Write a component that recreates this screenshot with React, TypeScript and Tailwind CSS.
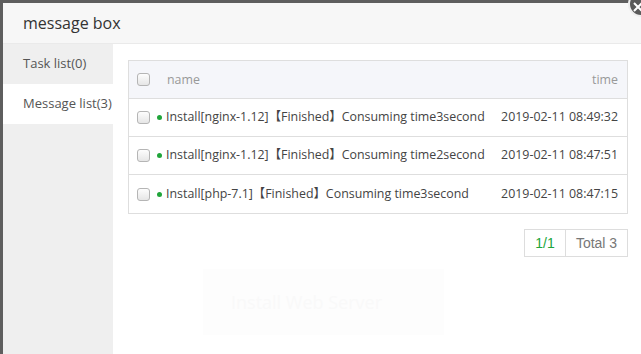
const rows = [
  { name: 'Install[nginx-1.12]【Finished】Consuming time3second', time: '2019-02-11 08:49:32' },
  { name: 'Install[nginx-1.12]【Finished】Consuming time2second', time: '2019-02-11 08:47:51' },
  { name: 'Install[php-7.1]【Finished】Consuming time3second', time: '2019-02-11 08:47:15' },
];

const font = { fontFamily: '"Open Sans", "Noto Sans CJK SC", sans-serif' };

function Checkbox() {
  return <span className="block shrink-0 w-[13px] h-[13px] rounded-[3px] border border-[#b5b5b5] bg-gradient-to-b from-[#fdfdfd] to-[#e6e6e6]" />;
}

export default function App() {
  return (
    <div className="w-[641px] h-[354px] bg-[#5e5e5e] pl-[3px] pt-[3px] overflow-hidden relative" style={font}>
      <div className="w-[660px] h-[360px] bg-white flex flex-col">
        <div className="h-[41px] bg-[#f7f7f7] border-b border-[#eaeaea] flex items-center pl-[20px] text-[16px] text-[#333]">
          message box
        </div>
        <div className="flex flex-1">
          <div className="w-[110px] bg-[#efefef] flex flex-col text-[13px] text-[#555]">
            <div className="h-[40px] flex items-center pl-[20px]">Task list(0)</div>
            <div className="h-[40px] flex items-center pl-[20px] bg-white">Message list(3)</div>
          </div>
          <div className="flex-1 pl-[15px] pt-[16px] relative">
            <div className="w-[500px] border border-[#dedede] text-[12.4px] whitespace-nowrap">
              <div className="h-[38px] bg-[#f5f6fa] flex items-center pl-[8px] pr-[9px] border-b border-[#dedede]">
                <Checkbox />
                <span className="ml-[17px] text-[#999] mt-[2px]">name</span>
                <span className="ml-auto text-[#999] mt-[2px]">time</span>
              </div>
              {rows.map((r, i) => (
                <div key={i} className={`h-[38px] flex items-center pl-[8px] pr-[9px] text-[#444] ${i < 2 ? 'border-b border-[#dedede]' : ''}`}>
                  <Checkbox />
                  <span className="ml-[7px] w-[5px] h-[5px] rounded-full bg-[#20a53a]" />
                  <span className="ml-[4px]">{r.name}</span>
                  <span className="ml-auto">{r.time}</span>
                </div>
              ))}
            </div>
            <div className="w-[500px] flex justify-end mt-[15px]">
              <div className="flex h-[28px] border border-[#ddd] text-[14px]" style={{ fontFamily: '"Liberation Sans", Arial, sans-serif' }}>
                <span className="w-[41px] flex items-center justify-center text-[#20a53a] border-r border-[#ddd]">1/1</span>
                <span className="w-[61px] flex items-center justify-center text-[#777]">Total 3</span>
              </div>
            </div>
            <div className="absolute left-[90px] top-[225px] w-[241px] h-[66px] bg-[#fdfdfd] flex items-center pl-[28px] text-[18px] text-[#f9f9f9]">
              Install Web Server
            </div>
          </div>
        </div>
      </div>
      <div className="absolute left-[628px] top-[-9px] w-[26px] h-[26px] rounded-full bg-[#5a5a5a] border-2 border-[#eee] flex items-center justify-center">
        <svg width="10" height="10" viewBox="0 0 10 10" className="-ml-[6px] mt-[6px]">
          <path d="M1 1L9 9M9 1L1 9" stroke="white" strokeWidth="2" />
        </svg>
      </div>
    </div>
  );
}
